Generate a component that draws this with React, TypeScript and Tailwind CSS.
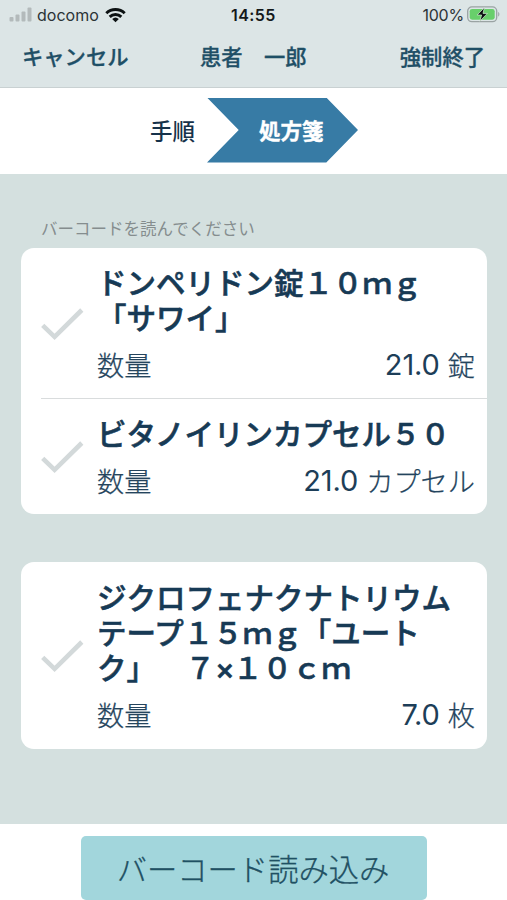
import React from 'react';

interface Medicine {
  lines: React.ReactNode[];
  amount: string;
  unit: string;
}

const groups: Medicine[][] = [
  [
    { lines: ['ドンペリドン錠１０ｍｇ', '「サワイ」'], amount: '21.0', unit: '錠' },
    { lines: ['ビタノイリンカプセル５０'], amount: '21.0', unit: 'カプセル' },
  ],
  [
    {
      lines: [
        'ジクロフェナクナトリウム',
        'テープ１５ｍｇ「ユート',
        <>ク」　７<span className="inline-block w-[18px] text-center font-['Inter'] leading-none">×</span>１０ｃｍ</>,
      ],
      amount: '7.0',
      unit: '枚',
    },
  ],
];

const StatusBar: React.FC = () => (
  <div className="relative flex h-[29px] items-center justify-between pl-[9px] pr-[7px] font-['Inter'] text-[#2b3336]">
    <div className="flex items-center">
      <svg width="24" height="15" viewBox="0 0 24 15" fill="#b3babb">
        <rect x="0.5" y="10" width="4" height="4.5" rx="1" />
        <rect x="6.5" y="7.5" width="4" height="7" rx="1" />
        <rect x="12.5" y="4.5" width="4" height="10" rx="1" />
        <rect x="18.5" y="0.5" width="4" height="14" rx="1" />
      </svg>
      <span className="ml-[4px] w-[61px] text-[16px] leading-none">docomo</span>
      <svg className="ml-[7px]" width="21" height="16" viewBox="0 0 21 16" fill="none" stroke="#0c1112" strokeWidth="2.9">
        <path d="M1.3 6.2a13.2 13.2 0 0 1 18.4 0" />
        <path d="M4.7 9.9a8.3 8.3 0 0 1 11.6 0" />
        <path d="M10.5 15.3 7.2 12.1a4.8 4.8 0 0 1 6.6 0Z" fill="#0c1112" stroke="none" />
      </svg>
    </div>
    <span className="absolute left-[231px] text-[16px] font-semibold leading-none tracking-[0.4px] text-[#14191b]">14:55</span>
    <div className="flex items-center">
      <span className="text-[16px] leading-none tracking-[-0.2px]">100%</span>
      <svg className="ml-[3px]" width="33" height="17" viewBox="0 0 33 17">
        <rect x="0.7" y="0.9" width="29" height="14.8" rx="4.2" fill="none" stroke="#9aa3a3" strokeWidth="1.3" />
        <rect x="2.7" y="2.9" width="25" height="10.8" rx="2.4" fill="#68cf6b" />
        <path d="M31.2 6v4.6c1.6-.6 1.6-4 0-4.6Z" fill="#9aa3a3" />
        <path d="M17.4 1.5 10.2 9h4.4l-1.7 6.2L20.4 7.4H16Z" fill="#0c1112" stroke="#d5efd7" strokeWidth="0.7" />
      </svg>
    </div>
  </div>
);

const NavBar: React.FC = () => (
  <div className="relative flex h-[54px] items-center justify-between pl-[22px] pr-[22px] text-[21.3px] font-medium leading-none text-[#1f4f66] [-webkit-text-stroke:0.3px_#1f4f66]">
    <button>キャンセル</button>
    <span className="absolute left-[200px] whitespace-pre">患者　一郎</span>
    <button>強制終了</button>
  </div>
);

const Steps: React.FC = () => (
  <div className="flex h-[86px] items-center bg-white pb-[2px] pl-[150px]">
    <span className="w-[57px] text-[22.5px] font-medium leading-none text-[#16324a]">手順</span>
    <div className="flex h-[65px] w-[151px] items-center bg-[#377ba5] pl-[52px] text-[21.5px] font-bold leading-none text-white [-webkit-text-stroke:0.4px_white] [clip-path:polygon(0_0,79%_0,100%_50%,79%_100%,0_100%,21%_50%)]">
      処方箋
    </div>
  </div>
);

const MedicineRow: React.FC<{ medicine: Medicine; divided: boolean }> = ({ medicine, divided }) => (
  <div className={`ml-[20px] flex items-center pr-[12px] ${divided ? 'border-t border-[#d9dcdd]' : ''}`}>
    <svg className="mt-[2px] shrink-0" width="43" height="33" viewBox="0 0 43 33" fill="none" stroke="#d3d9da" strokeWidth="4.6">
      <path d="M1.7 17.3 13.6 28.8 40.8 2" />
    </svg>
    <div className="ml-[13px] flex-1 pb-[17px] pt-[16px]">
      <h2 className="whitespace-nowrap text-[29.5px] font-medium leading-[35px] text-[#173a55] [-webkit-text-stroke:0.6px_#173a55]">
        {medicine.lines.map((line, i) => (
          <div key={i}>{line}</div>
        ))}
      </h2>
      <div className="mt-[14px] flex justify-between text-[27.2px] leading-[33px] text-[#24445d]">
        <span className="font-light [-webkit-text-stroke:0.25px_#24445d]">数量</span>
        <span className="flex gap-[8px]">
          <span className="font-['Inter'] text-[29px] tracking-[-0.1px] text-[#1d3e58]">{medicine.amount}</span>
          <span className="font-light [-webkit-text-stroke:0.25px_#24445d]">{medicine.unit}</span>
        </span>
      </div>
    </div>
  </div>
);

const App: React.FC = () => {
  return (
    <div
      lang="ja"
      className="flex h-[900px] w-[507px] flex-col overflow-hidden bg-[#d4e0df] font-['Noto_Sans_CJK_JP',sans-serif] [text-spacing-trim:space-all]"
    >
      {/* Header */}
      <header className="h-[88px] border-b border-[#c9d1d2] bg-[#dce5e6]">
        <StatusBar />
        <NavBar />
      </header>
      <Steps />

      {/* Medicine list */}
      <main className="flex-1 px-[21px] pt-[44px]">
        <p className="h-[30px] pl-[20px] text-[16.5px] leading-[21px] text-[#858d8e]">バーコードを読んでください</p>
        <div className="space-y-[48px]">
          {groups.map((group, i) => (
            <section key={i} className="flex min-h-[187px] w-[466px] flex-col justify-center rounded-[13px] bg-white">
              {group.map((medicine, j) => (
                <MedicineRow key={j} medicine={medicine} divided={j > 0} />
              ))}
            </section>
          ))}
        </div>
      </main>

      {/* Scan button */}
      <footer className="h-[76px] bg-white pl-[81px] pt-[12px]">
        <button className="h-[64px] w-[346px] rounded-[5px] bg-[#a2d6dc] pr-[2px] text-[30.3px] font-light leading-[62px] text-[#1f5063] [-webkit-text-stroke:0.3px_#1f5063]">
          バーコード読み込み
        </button>
      </footer>
    </div>
  );
};

export default App;
